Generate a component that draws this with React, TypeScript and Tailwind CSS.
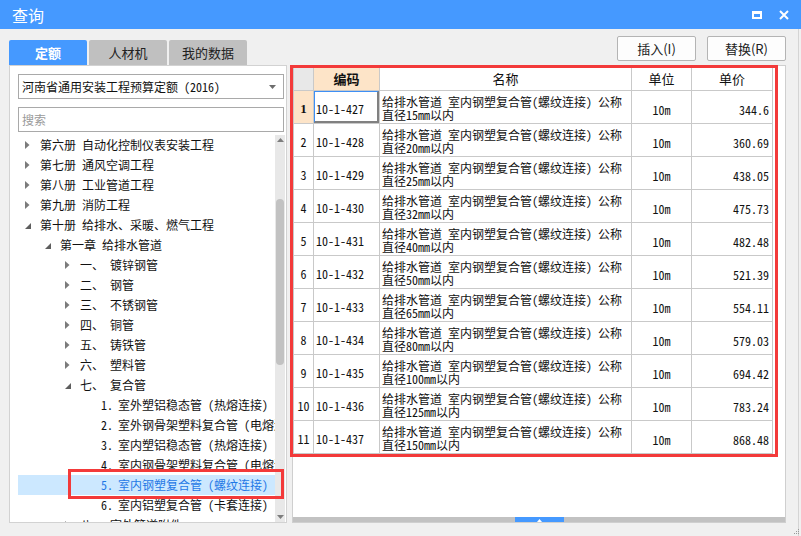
import React from "react";

const MONO = { fontFamily: '"Noto Sans Mono CJK SC","Noto Sans CJK SC","Liberation Mono",monospace' };
const SANS = { fontFamily: '"Noto Sans CJK SC","Noto Sans",sans-serif' };

type Node = { level: number; arrow?: "c" | "e"; label?: string; text: string; selected?: boolean };

const tree: Node[] = [
  { level: 0, arrow: "c", text: "第六册 自动化控制仪表安装工程" },
  { level: 0, arrow: "c", text: "第七册 通风空调工程" },
  { level: 0, arrow: "c", text: "第八册 工业管道工程" },
  { level: 0, arrow: "c", text: "第九册 消防工程" },
  { level: 0, arrow: "e", text: "第十册 给排水、采暖、燃气工程" },
  { level: 1, arrow: "e", text: "第一章 给排水管道" },
  { level: 2, arrow: "c", label: "一、", text: "镀锌钢管" },
  { level: 2, arrow: "c", label: "二、", text: "钢管" },
  { level: 2, arrow: "c", label: "三、", text: "不锈钢管" },
  { level: 2, arrow: "c", label: "四、", text: "铜管" },
  { level: 2, arrow: "c", label: "五、", text: "铸铁管" },
  { level: 2, arrow: "c", label: "六、", text: "塑料管" },
  { level: 2, arrow: "e", label: "七、", text: "复合管" },
  { level: 3, label: "1.", text: "室外塑铝稳态管 (热熔连接)" },
  { level: 3, label: "2.", text: "室外钢骨架塑料复合管 (电熔连接)" },
  { level: 3, label: "3.", text: "室内塑铝稳态管 (热熔连接)" },
  { level: 3, label: "4.", text: "室内钢骨架塑料复合管 (电熔连接)" },
  { level: 3, label: "5.", text: "室内钢塑复合管 (螺纹连接)", selected: true },
  { level: 3, label: "6.", text: "室内铝塑复合管 (卡套连接)" },
  { level: 2, arrow: "c", label: "八、", text: "室外管道附件" },
];

const rows = [
  ["10-1-427", "15", "344.6"],
  ["10-1-428", "20", "360.69"],
  ["10-1-429", "25", "438.05"],
  ["10-1-430", "32", "475.73"],
  ["10-1-431", "40", "482.48"],
  ["10-1-432", "50", "521.39"],
  ["10-1-433", "65", "554.11"],
  ["10-1-434", "80", "579.03"],
  ["10-1-435", "100", "694.42"],
  ["10-1-436", "125", "783.24"],
  ["10-1-437", "150", "868.48"],
];

function Arrow({ kind }: { kind: "c" | "e" }) {
  if (kind === "c")
    return (
      <svg width="5" height="8" viewBox="0 0 5 8">
        <path d="M0 0 L4.5 4 L0 8 Z" fill="#7b7b7b" />
      </svg>
    );
  return (
    <svg width="6" height="6" viewBox="0 0 6 6" className="mt-[2px]">
      <path d="M6 0 L6 6 L0 6 Z" fill="#5e5e5e" />
    </svg>
  );
}

function TreeRow({ n }: { n: Node }) {
  const pad = n.level === 0 ? "pl-[7px]" : n.level === 1 ? "pl-[27px]" : n.level === 2 ? "pl-[47px]" : "pl-[83px]";
  return (
    <div
      className={`h-[20px] flex items-center whitespace-pre ${pad} ${n.selected ? "bg-[#cce8ff] text-[#1f78e6]" : "text-[#111]"}`}
    >
      {n.arrow ? (
        <span className="w-[15px] shrink-0 flex items-center">
          <Arrow kind={n.arrow} />
        </span>
      ) : null}
      {n.label ? (
        <span className={`shrink-0 ${n.level === 3 ? "w-[17px]" : "w-[30px]"}`}>{n.label}</span>
      ) : null}
      <span className="shrink-0">{n.text}</span>
    </div>
  );
}

export default function App() {
  return (
    <div className="w-[801px] h-[536px] bg-[#f0f0f0] flex flex-col relative overflow-hidden text-[12px]" style={SANS}>
      {/* title bar */}
      <div className="h-[29px] bg-[#4599ff] flex items-center justify-between pl-[12px] pr-[12px] shrink-0">
        <span className="text-white text-[16px] leading-none">查询</span>
        <div className="flex items-center gap-[17px]">
          <div className="w-[10px] h-[8px] border-2 border-t-[3px] border-white" />
          <svg width="10" height="10" viewBox="0 0 10 10">
            <path d="M1 1 L9 9 M9 1 L1 9" stroke="white" strokeWidth="2" />
          </svg>
        </div>
      </div>

      <div className="flex-1 flex flex-col pl-[9px] pr-[12px] border-r border-[#d4d4d4] mr-[2px]">
        {/* tabs + buttons */}
        <div className="h-[36px] flex justify-between shrink-0">
          <div className="flex gap-[2px] mt-[11px] h-[25px]">
            <div className="w-[78px] h-full bg-[#4599ff] rounded-t-[2px] flex items-center justify-center text-white font-bold text-[13px]">定额</div>
            <div className="w-[78px] h-full bg-[#c0c0c0] rounded-t-[2px] flex items-center justify-center text-[#222] text-[13px]">人材机</div>
            <div className="w-[78px] h-full bg-[#c0c0c0] rounded-t-[2px] flex items-center justify-center text-[#222] text-[13px]">我的数据</div>
          </div>
          <div className="flex gap-[11px] mt-[7px] h-[25px]">
            <button className="w-[79px] h-full bg-[#fdfdfd] border border-[#b4b4b4] rounded-[2px] text-[13px] text-[#222]">插入(I)</button>
            <button className="w-[79px] h-full bg-[#fdfdfd] border border-[#b4b4b4] rounded-[2px] text-[13px] text-[#222]">替换(R)</button>
          </div>
        </div>

        {/* content */}
        <div className="h-[458px] flex gap-[5px]" style={MONO}>
          {/* left panel */}
          <div className="w-[278px] h-full bg-white border border-[#d2d2d2] flex flex-col pl-[8px] pr-[1px] pt-[8px]">
            <div className="w-[266px] h-[25px] border border-[#a9a9a9] flex items-center justify-between pl-[3px] pr-[7px] shrink-0">
              <span className="text-[#111] whitespace-nowrap">河南省通用安装工程预算定额 (2016)</span>
              <svg width="7" height="4" viewBox="0 0 7 4">
                <path d="M0 0 L7 0 L3.5 4 Z" fill="#6d6d6d" />
              </svg>
            </div>
            <div className="w-[266px] h-[25px] border border-[#a9a9a9] flex items-center pl-[3px] mt-[8px] shrink-0">
              <span className="text-[#9a9a9a]">搜索</span>
            </div>
            <div className="flex-1 flex mt-[3px] overflow-hidden relative">
              <div className="w-[257px] overflow-hidden">
                {tree.map((n, i) => (
                  <TreeRow key={i} n={n} />
                ))}
              </div>
              <div className="w-[10px] h-full bg-[#e8e8e8] flex flex-col items-center justify-between py-[3px]">
                <svg width="7" height="4" viewBox="0 0 7 4">
                  <path d="M0 4 L7 4 L3.5 0 Z" fill="#7d7d7d" />
                </svg>
                <div className="flex-1 w-full flex flex-col pt-[57px] pb-[150px] px-[1px]">
                  <div className="w-full flex-1 bg-[#c2c2c2] rounded-[4px]" />
                </div>
                <svg width="7" height="4" viewBox="0 0 7 4">
                  <path d="M0 0 L7 0 L3.5 4 Z" fill="#7d7d7d" />
                </svg>
              </div>
              {/* annotation box */}
              <div className="absolute left-[50px] top-[334px] w-[216px] h-[30px] border-[3px] border-[#f33a3a]" />
            </div>
          </div>

          {/* right panel */}
          <div className="w-[497px] h-full bg-white border border-[#cfcfcf] flex flex-col relative">
            <div className="flex-1 overflow-hidden">
              <table className="border-collapse table-fixed text-[12px] leading-[13px] text-[#111]">
                <colgroup>
                  <col className="w-[20px]" />
                  <col className="w-[66px]" />
                  <col className="w-[252px]" />
                  <col className="w-[60px]" />
                  <col className="w-[81px]" />
                </colgroup>
                <thead>
                  <tr className="h-[24px]">
                    <th className="bg-[#e8e8e8] border border-[#c9c9c9]" />
                    <th className="bg-[#fde4c8] border border-[#c9c9c9] font-bold text-[13px]">编码</th>
                    <th className="border border-[#c9c9c9] font-normal text-[13px]">名称</th>
                    <th className="border border-[#c9c9c9] font-normal text-[13px]">单位</th>
                    <th className="border border-[#c9c9c9] font-normal text-[13px]">单价</th>
                  </tr>
                </thead>
                <tbody>
                  {rows.map((r, i) => (
                    <tr key={i} className="h-[33px]">
                      <td
                        className={`border border-[#c9c9c9] text-center pt-[2px] ${i === 0 ? "bg-[#fde4c8] font-bold" : ""}`}
                        style={i === 0 ? { fontFamily: '"Liberation Serif",serif', fontSize: 13 } : undefined}
                      >
                        {i + 1}
                      </td>
                      <td className="border border-[#c9c9c9] pl-[2px] pt-[3px] relative whitespace-nowrap">
                        {r[0]}
                        {i === 0 ? (
                          <div className="absolute inset-0 border-l border-t border-l-[#3d8ff5] border-t-[#3d8ff5] border-r-2 border-b-2 border-r-[#808080] border-b-[#808080]" />
                        ) : null}
                      </td>
                      <td className="border border-[#c9c9c9] pl-[2px] pt-[1px] whitespace-pre">
                        {"给排水管道 室内钢塑复合管(螺纹连接) 公称"}
                        <br />
                        直径{r[1]}mm以内
                      </td>
                      <td className="border border-[#c9c9c9] text-center pt-[4px]">10m</td>
                      <td className="border border-[#c9c9c9] text-right pr-[3px] pt-[4px]">{r[2]}</td>
                    </tr>
                  ))}
                </tbody>
              </table>
            </div>
            {/* horizontal scrollbar */}
            <div className="h-[5px] bg-[#c2c2c2] flex shrink-0">
              <div className="w-[222px]" />
              <div className="w-[49px] h-full bg-[#4599ff] flex items-end justify-center">
                <svg width="5" height="3" viewBox="0 0 5 3">
                  <path d="M0 3 L5 3 L2.5 0 Z" fill="white" />
                </svg>
              </div>
            </div>
            {/* annotation box */}
            <div className="absolute left-[-3px] top-[-1px] w-[488px] h-[392px] border-[3px] border-[#f33a3a]" />
          </div>
        </div>
      </div>

      {/* resize grip */}
      <div className="absolute right-[2px] bottom-[2px] grid grid-cols-3 gap-[1px]">
        <span className="w-[1px] h-[1px]" />
        <span className="w-[1px] h-[1px]" />
        <span className="w-[1px] h-[1px] bg-[#999]" />
        <span className="w-[1px] h-[1px]" />
        <span className="w-[1px] h-[1px] bg-[#999]" />
        <span className="w-[1px] h-[1px] bg-[#999]" />
        <span className="w-[1px] h-[1px] bg-[#999]" />
        <span className="w-[1px] h-[1px] bg-[#999]" />
        <span className="w-[1px] h-[1px] bg-[#999]" />
      </div>
    </div>
  );
}
